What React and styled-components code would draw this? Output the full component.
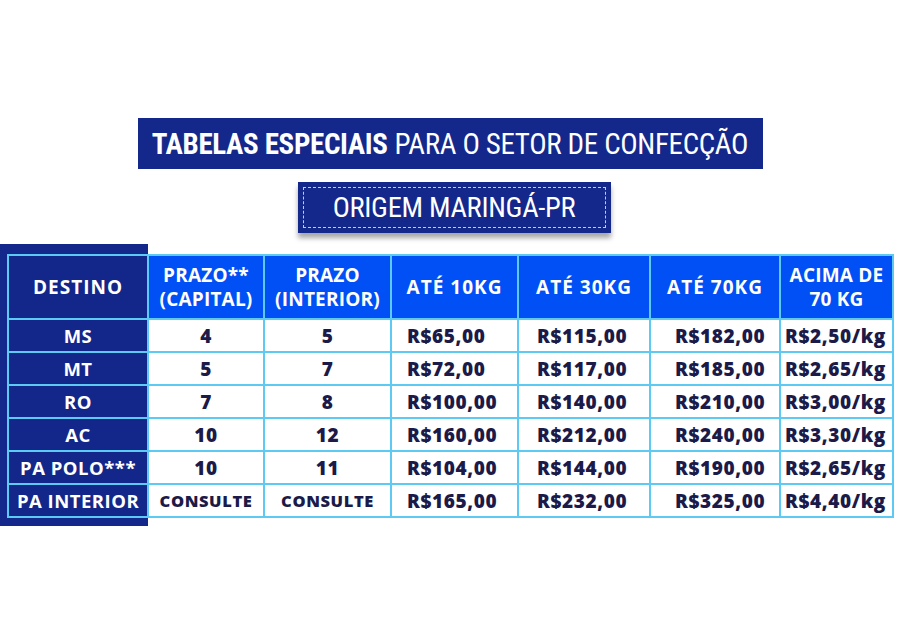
import React from "react";
import styled, { createGlobalStyle } from "styled-components";

const GlobalStyle = createGlobalStyle`
  html, body {
    margin: 0;
    padding: 0;
    background: #ffffff;
  }
  body {
    font-family: "Open Sans", "Noto Sans", sans-serif;
  }
`;

const Page = styled.div`
  width: 900px;
  height: 640px;
  display: flex;
  flex-direction: column;
  align-items: center;
  padding-top: 118px;
  box-sizing: border-box;
`;

const TitleBar = styled.div`
  width: 625px;
  height: 51px;
  background: #14278b;
  color: #ffffff;
  display: flex;
  align-items: center;
  justify-content: center;
  font-family: "Roboto Condensed", "DejaVu Sans Condensed", "Liberation Sans Narrow", "Roboto", sans-serif;
  font-stretch: condensed;
  font-size: 29px;
  letter-spacing: -0.35px;
  white-space: nowrap;

  b {
    font-weight: 700;
    margin-right: 7px;
  }
`;

const OriginBox = styled.div`
  margin-top: 13px;
  margin-left: 8px;
  width: 313px;
  height: 51px;
  background: #14278b;
  padding: 5px;
  box-sizing: border-box;
  box-shadow: 0 5px 5px rgba(0, 0, 0, 0.35);
`;

const OriginInner = styled.div`
  height: 100%;
  border: 1px dashed rgba(255, 255, 255, 0.75);
  box-sizing: border-box;
  display: flex;
  align-items: center;
  justify-content: center;
  color: #ffffff;
  font-family: "Roboto Condensed", "DejaVu Sans Condensed", "Liberation Sans Narrow", "Roboto", sans-serif;
  font-stretch: condensed;
  font-size: 28.5px;
  letter-spacing: -0.3px;
`;

const TableWrap = styled.div`
  position: relative;
  align-self: flex-start;
  margin-top: 21px;
  margin-left: 7px;

  &::before {
    content: "";
    position: absolute;
    left: -7px;
    top: -10px;
    bottom: -8px;
    width: 148px;
    background: #14278b;
  }
`;

const Grid = styled.div`
  position: relative;
  display: grid;
  grid-template-columns: 138px 114px 125px 125px 130px 128px 111px;
  grid-template-rows: 62px repeat(6, 31px);
  gap: 2px;
  padding: 2px;
  background: #5ccaf3;
`;

const Head = styled.div`
  background: ${(p) => (p.$dark ? "#13268a" : "#0050f5")};
  color: #ffffff;
  display: flex;
  align-items: center;
  justify-content: center;
  text-align: center;
  font-weight: 700;
  font-size: 19px;
  line-height: 24px;
  letter-spacing: ${(p) => (p.$tight ? "0.2px" : "1px")};
  white-space: nowrap;
`;

const Dest = styled.div`
  background: #13268a;
  color: #ffffff;
  display: flex;
  align-items: center;
  justify-content: center;
  font-weight: 700;
  font-size: 18.5px;
  letter-spacing: 0.5px;
  white-space: nowrap;
`;

const Cell = styled.div`
  background: #ffffff;
  color: #1b1a48;
  display: flex;
  align-items: center;
  justify-content: ${(p) => (p.$pad != null ? "flex-start" : "center")};
  padding-left: ${(p) => (p.$pad != null ? `${p.$pad}px` : "0")};
  font-weight: 800;
  font-size: ${(p) => (p.$small ? "16.5px" : "19px")};
  letter-spacing: 0.6px;
  white-space: nowrap;
`;

const rows = [
  ["MS", "4", "5", "R$65,00", "R$115,00", "R$182,00", "R$2,50/kg"],
  ["MT", "5", "7", "R$72,00", "R$117,00", "R$185,00", "R$2,65/kg"],
  ["RO", "7", "8", "R$100,00", "R$140,00", "R$210,00", "R$3,00/kg"],
  ["AC", "10", "12", "R$160,00", "R$212,00", "R$240,00", "R$3,30/kg"],
  ["PA POLO***", "10", "11", "R$104,00", "R$144,00", "R$190,00", "R$2,65/kg"],
  ["PA INTERIOR", "CONSULTE", "CONSULTE", "R$165,00", "R$232,00", "R$325,00", "R$4,40/kg"],
];

const pads = [15, 18, 24, 4];

export default function App() {
  return (
    <>
      <GlobalStyle />
      <Page>
        <TitleBar>
          <b>TABELAS ESPECIAIS</b>PARA O SETOR DE CONFECÇÃO
        </TitleBar>
        <OriginBox>
          <OriginInner>ORIGEM MARINGÁ-PR</OriginInner>
        </OriginBox>
        <TableWrap>
          <Grid>
            <Head $dark>DESTINO</Head>
            <Head $tight>PRAZO**<br />(CAPITAL)</Head>
            <Head $tight>PRAZO<br />(INTERIOR)</Head>
            <Head>ATÉ 10KG</Head>
            <Head>ATÉ 30KG</Head>
            <Head>ATÉ 70KG</Head>
            <Head $tight>ACIMA DE<br />70 KG</Head>
            {rows.map((r) => (
              <React.Fragment key={r[0]}>
                <Dest>{r[0]}</Dest>
                <Cell $small={r[1] === "CONSULTE"}>{r[1]}</Cell>
                <Cell $small={r[2] === "CONSULTE"}>{r[2]}</Cell>
                {r.slice(3).map((v, i) => (
                  <Cell key={i} $pad={pads[i]}>{v}</Cell>
                ))}
              </React.Fragment>
            ))}
          </Grid>
        </TableWrap>
      </Page>
    </>
  );
}
